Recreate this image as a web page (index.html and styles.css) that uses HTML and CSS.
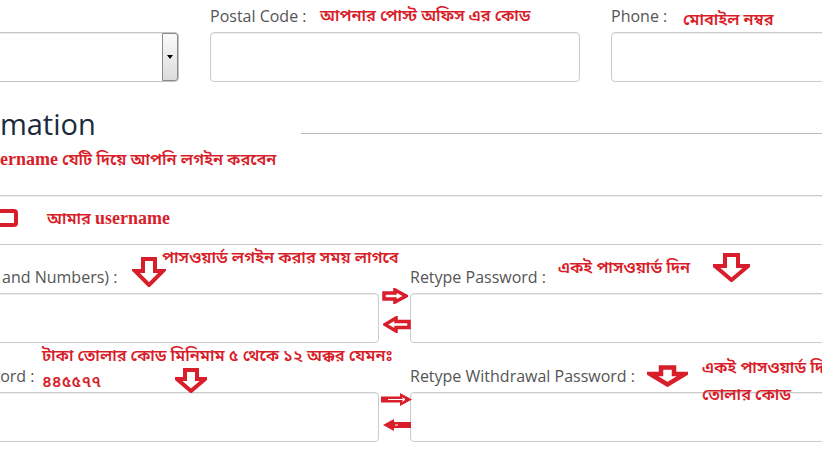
FILE: index.html
```html
<!DOCTYPE html>
<html>

<head>
    <title>Registration</title>

    <link rel="stylesheet" href="styles.css">
</head>

<body>
    <div class="page">
        <form class="form">
            <div class="row row3">
                <div class="field">
                    <label>District :</label>
                    <div class="control select"><span class="select-btn"><span class="caret"></span></span></div>
                </div>
                <div class="field">
                    <label>Postal Code :</label>
                    <input class="control" type="text">
                </div>
                <div class="field">
                    <label>Phone :</label>
                    <input class="control" type="text">
                </div>
            </div>

            <div class="section-head">
                <h2>Login Information</h2>
                <div class="section-line"></div>
            </div>

            <div class="field wide">
                <input class="control" type="text">
            </div>

            <div class="row row2 pw-row">
                <div class="field">
                    <label>Password (Letters and Numbers) :</label>
                    <input class="control" type="password">
                </div>
                <div class="field">
                    <label>Retype Password :</label>
                    <input class="control" type="password">
                </div>
            </div>

            <div class="row row2 wd-row">
                <div class="field">
                    <label>Withdrawal Password :</label>
                    <input class="control" type="password">
                </div>
                <div class="field">
                    <label>Retype Withdrawal Password :</label>
                    <input class="control" type="password">
                </div>
            </div>
        </form>

        <!-- annotations drawn over the form -->
        <div class="note note-postal">আপনার পোস্ট অফিস এর কোড</div>
        <div class="note note-phone">মোবাইল নম্বর</div>
        <div class="note note-user"><b>Username</b> যেটি দিয়ে আপনি লগইন করবেন</div>
        <div class="note note-myuser">আমার <b>username</b></div>
        <div class="note note-pw">পাসওয়ার্ড লগইন করার সময় লাগবে</div>
        <div class="note note-repw">একই পাসওয়ার্ড দিন</div>
        <div class="note note-wd">টাকা তোলার কোড মিনিমাম ৫ থেকে ১২ অক্কর যেমনঃ<br>৪৪৫৫৭৭</div>
        <div class="note note-rewd">একই পাসওয়ার্ড দিন টাকা<br>তোলার কোড</div>

        <svg class="mark mark-user" width="48" height="18" viewBox="0 0 48 18">
            <rect x="2" y="2" width="44" height="14" rx="2" fill="#fff" stroke="#d81e2a" stroke-width="4"/>
        </svg>
        <svg class="mark mark-pw" width="34" height="30" viewBox="0 0 34 30">
            <path d="M11 2H23V14H31L17 28L3 14H11Z" fill="#fff" stroke="#d81e2a" stroke-width="4"/>
        </svg>
        <svg class="mark mark-pw-r" width="26" height="16" viewBox="0 0 26 16">
            <path d="M2 5H13V2L24 8L13 14V11H2Z" fill="#fff" stroke="#d81e2a" stroke-width="3.5"/>
        </svg>
        <svg class="mark mark-pw-l" width="28" height="17" viewBox="0 0 28 17">
            <path d="M26 5.5H13V2L2 8.5L13 15V11.5H26Z" fill="#fff" stroke="#d81e2a" stroke-width="3.5"/>
        </svg>
        <svg class="mark mark-repw" width="37" height="29" viewBox="0 0 37 29">
            <path d="M12 2H25V13H35L18.5 27L2 13H12Z" fill="#fff" stroke="#d81e2a" stroke-width="4"/>
        </svg>
        <svg class="mark mark-wd" width="32" height="25" viewBox="0 0 32 25">
            <path d="M10 2H22V11H30L16 23L2 11H10Z" fill="#fff" stroke="#d81e2a" stroke-width="4"/>
        </svg>
        <svg class="mark mark-wd-r" width="31" height="13" viewBox="0 0 31 13">
            <path d="M0 3.5H19V0L31 6.5L19 13V9.5H0Z" fill="#d81e2a"/>
            <path d="M7 6.5H24M21 4.5L24 6.5L21 8.5" fill="none" stroke="#fff" stroke-width="1"/>
        </svg>
        <svg class="mark mark-wd-l" width="28" height="12" viewBox="0 0 28 12">
            <path d="M28 3H11V0L0 6L11 12V9H28Z" fill="#d81e2a"/>
            <path d="M12 6H15" stroke="#fff" stroke-width="1"/>
        </svg>
        <svg class="mark mark-rewd" width="41" height="22" viewBox="0 0 41 22">
            <path d="M14 2.5H27V9H38L20.5 19.5L3 9H14Z" fill="#fff" stroke="#d81e2a" stroke-width="4.5"/>
        </svg>
    </div>
</body>
</html>
```

FILE: styles.css
```css
body {
    margin: 0;
    background: #fff;
    font-family: "Open Sans", "Liberation Sans", sans-serif;
}

.page {
    position: relative;
    width: 822px;
    height: 463px;
    overflow: hidden;
}

.form {
    margin-left: -135px;
    width: 1120px;
}

.row {
    display: grid;
    column-gap: 31px;
}

.row3 {
    grid-template-columns: 314px 370px 370px;
    padding-top: 5px;
}

.row2 {
    grid-template-columns: 514px 570px;
}

.pw-row {
    margin-top: 21px;
}

.wd-row {
    margin-top: 22px;
}

.field label {
    display: block;
    font-size: 16px;
    line-height: 22px;
    color: #555;
    margin-bottom: 5px;
}

.control {
    display: block;
    width: 100%;
    height: 50px;
    box-sizing: border-box;
    border: 1px solid #ccc;
    border-radius: 4px;
    background: #fff;
    box-shadow: inset 0 1px 1px rgba(0, 0, 0, 0.075);
    margin: 0;
    padding: 0 12px;
}

.select {
    display: flex;
    justify-content: flex-end;
    padding: 0;
    border-color: #c4c4c4;
}

.select-btn {
    width: 16px;
    height: 48px;
    box-sizing: border-box;
    border: 1px solid #8a8a8a;
    border-radius: 0 3px 3px 0;
    background: linear-gradient(#fafafa, #dcdcdc);
    display: flex;
    align-items: center;
    justify-content: center;
}

.caret {
    width: 0;
    height: 0;
    border-left: 3px solid transparent;
    border-right: 3px solid transparent;
    border-top: 4px solid #000;
}

.section-head {
    display: flex;
    height: 40px;
    margin-top: 22px;
}

.section-head h2 {
    margin: 0 0 0 -11px;
    font-size: 29px;
    line-height: 40px;
    font-weight: 400;
    color: #1a2b3c;
    white-space: nowrap;
}

.section-line {
    flex: 1;
    align-self: flex-end;
    margin: 0 0 10px 205px;
    border-top: 1px solid #bbb;
}

.wide {
    margin-top: 51px;
}

/* annotations */

.note {
    position: absolute;
    color: #d81e2a;
    font-family: "Liberation Serif", "Noto Sans Bengali", "Noto Serif Bengali", "Lohit Bengali", sans-serif;
    font-size: 16.4px;
    font-weight: 600;
    line-height: 26px;
    white-space: nowrap;
}

.note b {
    font-size: 18px;
    font-weight: 700;
}

.note-postal { left: 320px; top: 3px; }
.note-phone { left: 683px; top: 7px; }
.note-user { left: -20px; top: 146px; }
.note-myuser { left: 47px; top: 205px; }
.note-pw { left: 162px; top: 245px; }
.note-repw { left: 558px; top: 255px; }
.note-wd { left: 42px; top: 343px; }
.note-rewd { left: 702px; top: 354px; line-height: 27px; }

.mark {
    position: absolute;
    display: block;
}

.mark-user { left: -30px; top: 209px; }
.mark-pw { left: 132px; top: 257px; }
.mark-pw-r { left: 382px; top: 288px; }
.mark-pw-l { left: 383px; top: 316px; }
.mark-repw { left: 713px; top: 253px; }
.mark-wd { left: 175px; top: 368px; }
.mark-wd-r { left: 381px; top: 393px; }
.mark-wd-l { left: 383px; top: 419px; }
.mark-rewd { left: 647px; top: 365px; }
```
